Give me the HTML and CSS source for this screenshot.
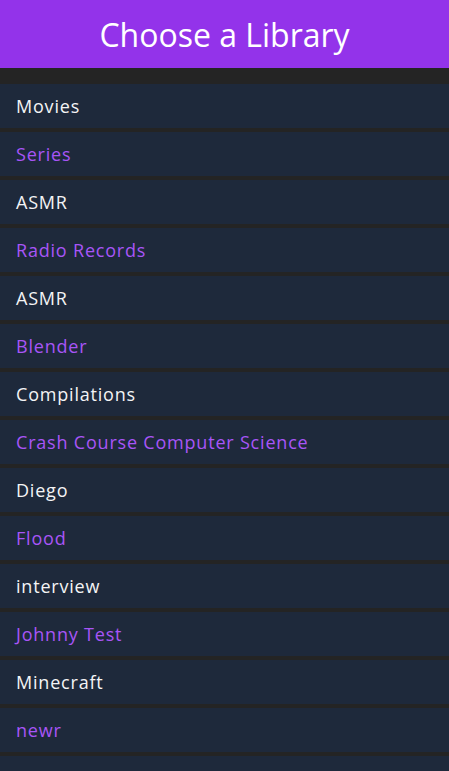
FILE: index.html
```html
<!DOCTYPE html>
<html lang="en">
<head>
<meta charset="utf-8">
<title>Choose a Library</title>
<link rel="stylesheet" href="styles.css">
</head>
<body>
<header class="header"><h1 class="title">Choose a Library</h1></header>
<main class="list">
  <a class="item">Movies</a>
  <a class="item alt">Series</a>
  <a class="item">ASMR</a>
  <a class="item alt">Radio Records</a>
  <a class="item">ASMR</a>
  <a class="item alt">Blender</a>
  <a class="item">Compilations</a>
  <a class="item alt">Crash Course Computer Science</a>
  <a class="item">Diego</a>
  <a class="item alt">Flood</a>
  <a class="item">interview</a>
  <a class="item alt">Johnny Test</a>
  <a class="item">Minecraft</a>
  <a class="item alt">newr</a>
  <a class="item"></a>
</main>
</body>
</html>
```
FILE: styles.css
```css
html, body {
  margin: 0;
  padding: 0;
  background: #242424;
  font-family: "Open Sans", "Liberation Sans", sans-serif;
}
.header {
  height: 68px;
  background: #9333ea;
  display: flex;
  align-items: center;
  justify-content: center;
}
.title {
  margin: 0;
  color: #ffffff;
  font-weight: 400;
  font-size: 32px;
}
.list {
  display: flex;
  flex-direction: column;
  gap: 4px;
  padding-top: 16px;
}
.item {
  height: 44px;
  display: flex;
  align-items: center;
  padding-left: 16px;
  background: #1e293b;
  color: #f4f4f5;
  font-size: 18px;
  letter-spacing: 0.8px;
}
.item.alt {
  color: #a855f7;
}
```
